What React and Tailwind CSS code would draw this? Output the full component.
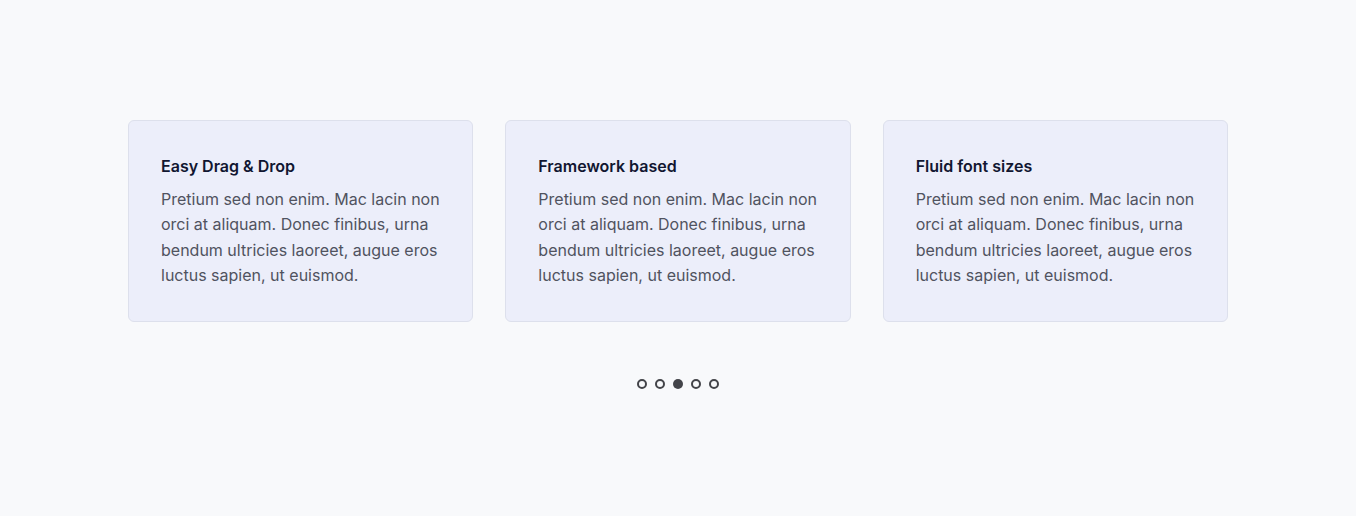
export default function App() {
  const cards = [
    { title: "Easy Drag & Drop" },
    { title: "Framework based" },
    { title: "Fluid font sizes" },
  ];
  const body =
    "Pretium sed non enim. Mac lacin non orci at aliquam. Donec finibus, urna bendum ultricies laoreet, augue eros luctus sapien, ut euismod.";
  return (
    <div
      className="min-h-[516px] bg-[#f8f9fb] pt-[120px]"
      style={{ fontFamily: "Inter, 'Noto Sans', sans-serif" }}
    >
      <div className="mx-auto flex w-[1100px] gap-[32px]">
        {cards.map((c) => (
          <div
            key={c.title}
            className="flex-1 rounded-[6px] border border-[#dde0ec] bg-[#eceefa] px-[32px] pt-[33px] pb-[32px]"
          >
            <h3 className="text-[16px] font-semibold leading-[25.6px] text-[#111631]">
              {c.title}
            </h3>
            <p className="mt-[7px] text-[16px] leading-[25.6px] text-[#50535f]">
              {body}
            </p>
          </div>
        ))}
      </div>
      <div className="mt-[57px] flex justify-center gap-[8px]">
        {[0, 1, 2, 3, 4].map((i) => (
          <span
            key={i}
            className={
              i === 2
                ? "h-[10px] w-[10px] rounded-full bg-[#434449]"
                : "h-[10px] w-[10px] rounded-full border-2 border-[#434449]"
            }
          />
        ))}
      </div>
    </div>
  );
}
